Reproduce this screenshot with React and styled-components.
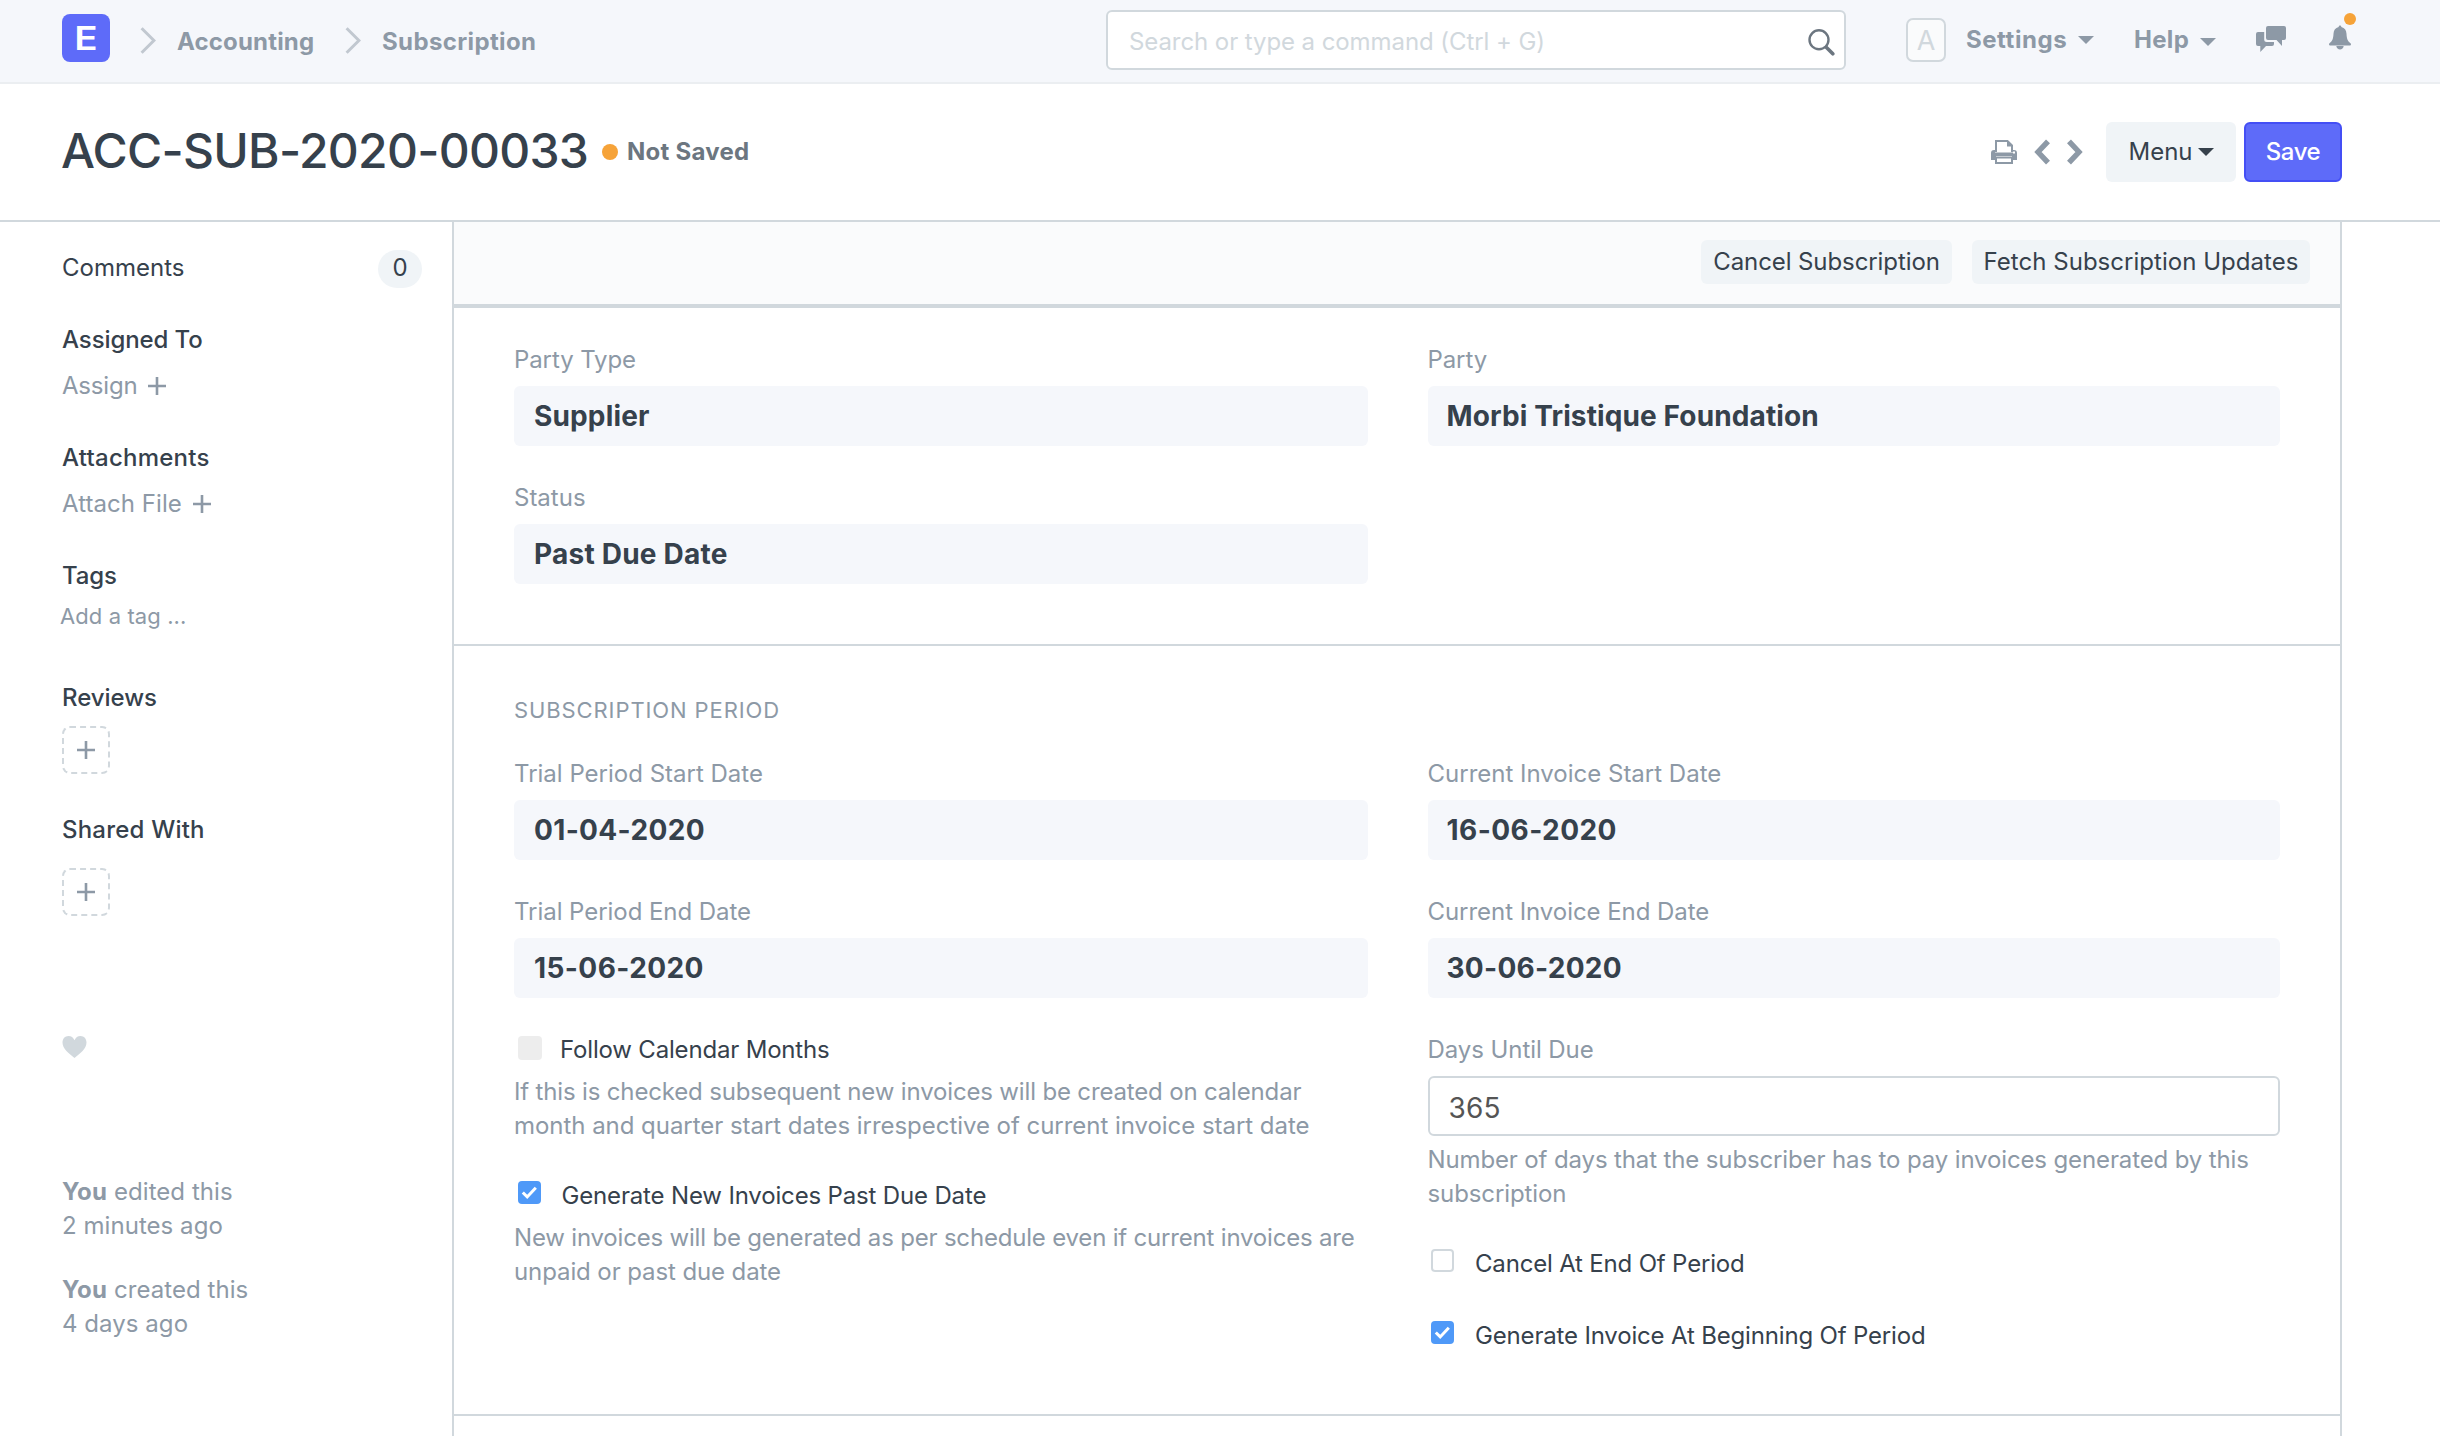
import React from "react";
import styled, { createGlobalStyle } from "styled-components";

const c = {
  ink: "#36414c",
  muted: "#8d99a6",
  line: "#d1d8dd",
  faint: "#f5f7fb",
  button: "#f0f4f7",
  primary: "#5e6bf9",
  orange: "#f6a339",
  blue: "#4f99f8",
};

const GlobalStyle = createGlobalStyle`
  * { box-sizing: border-box; }
  body {
    margin: 0;
    background: #fff;
    color: ${c.ink};
    font-family: Inter, "Liberation Sans", sans-serif;
    font-size: 24px;
    line-height: 34px;
    overflow: hidden;
  }
  svg { display: block; flex: none; }
`;

const Page = styled.div`
  display: flex;
  flex-direction: column;
  width: 2440px;
  height: 1436px;
  overflow: hidden;
`;

/* ---- navbar ---- */
const Navbar = styled.header`
  display: flex;
  align-items: flex-start;
  flex: none;
  height: 84px;
  padding-left: 62px;
  background: ${c.faint};
  border-bottom: 2px solid #ebeef1;
  color: ${c.muted};
`;
const Crumbs = styled.nav`
  display: flex;
  align-items: flex-start;
  width: 1044px;
`;
const Logo = styled.div`
  width: 48px;
  height: 48px;
  margin-top: 14px;
  border-radius: 8px;
  background: ${c.primary};
  color: #fff;
  font-size: 33px;
  font-weight: 600;
  line-height: 48px;
  text-align: center;
  span {
    display: block;
    transform: scaleX(1.17);
  }
`;
const CrumbChevron = styled.svg`
  margin: 27px 21px 0 30px;
`;
const Crumb = styled.span`
  width: ${(p) => p.$w}px;
  margin-top: 25px;
  font-weight: 700;
  letter-spacing: ${(p) => p.$track}px;
`;
const SearchBox = styled.div`
  display: flex;
  align-items: flex-start;
  justify-content: space-between;
  width: 740px;
  height: 60px;
  margin-top: 10px;
  padding: 13px 9.5px 0 21px;
  border: 2px solid ${c.line};
  border-radius: 6px;
  background: #fff;
  color: ${c.line};
  letter-spacing: -0.08px;
`;
const SearchIcon = styled.svg`
  margin-top: 4px;
`;
const Avatar = styled.div`
  width: 40px;
  height: 44px;
  margin: 18px 20px 0 60px;
  border: 2px solid ${c.line};
  border-radius: 7px;
  background: #fafbfc;
  color: ${c.line};
  font-size: 27px;
  line-height: 41px;
  text-align: center;
`;
const NavItem = styled.div`
  display: flex;
  justify-content: space-between;
  width: ${(p) => p.$w}px;
  margin: 23px 40px 0 0;
  font-weight: 700;
  letter-spacing: ${(p) => p.$track}px;
`;
const Caret = styled.i`
  flex: none;
  width: 16px;
  height: 8px;
  margin-top: ${(p) => p.$top || 0}px;
  background: currentColor;
  clip-path: polygon(0 0, 100% 0, 50% 100%);
`;
const ChatIcon = styled.svg`
  margin: 26px 43px 0 0;
`;
const BellWrap = styled.div`
  position: relative;
  margin-top: 25px;
`;
const BellDot = styled.span`
  position: absolute;
  top: -12px;
  left: 15px;
  width: 12px;
  height: 12px;
  border-radius: 50%;
  background: ${c.orange};
`;

/* ---- page head ---- */
const PageHead = styled.div`
  display: flex;
  align-items: flex-start;
  flex: none;
  height: 138px;
  padding: 38px 98px 0 61px;
  border-bottom: 2px solid ${c.line};
`;
const Title = styled.h1`
  width: 541px;
  margin: -5px 0 0;
  font-size: 48px;
  font-weight: 500;
  line-height: 68px;
  letter-spacing: -0.72px;
  white-space: nowrap;
`;
const Indicator = styled.span`
  display: flex;
  align-items: center;
  gap: 9px;
  margin-top: 13px;
  color: #6c7680;
  font-weight: 700;
  letter-spacing: 0.25px;
  &::before {
    content: "";
    width: 16px;
    height: 16px;
    border-radius: 50%;
    background: ${c.orange};
  }
`;
const HeadActions = styled.div`
  display: flex;
  align-items: center;
  height: 60px;
  margin-left: auto;
  color: ${c.muted};
`;
const Pager = styled.div`
  display: flex;
  gap: 17px;
  margin: -1px 23.5px 0 17px;
`;
const MenuButton = styled.button`
  display: flex;
  align-items: center;
  justify-content: space-between;
  width: 130px;
  height: 60px;
  margin-right: 8px;
  padding: 0 22px 0 22.5px;
  border: 0;
  border-radius: 6px;
  background: ${c.button};
  color: ${c.ink};
  font: inherit;
  line-height: 60px;
`;
const SaveButton = styled.button`
  width: 98px;
  height: 60px;
  padding: 0;
  border: 2px solid #444ff5;
  border-radius: 6px;
  background: ${c.primary};
  color: #fff;
  font: inherit;
  font-weight: 500;
  letter-spacing: -0.4px;
  line-height: 56px;
`;

/* ---- body ---- */
const Body = styled.div`
  display: flex;
  flex: 1;
  min-height: 0;
`;
const Sidebar = styled.aside`
  display: flex;
  flex-direction: column;
  align-items: flex-start;
  flex: none;
  width: 452px;
  padding: 28px 30px 0 62px;
  color: ${c.muted};
`;
const CommentsRow = styled.div`
  display: flex;
  justify-content: space-between;
  width: 100%;
  color: ${c.ink};
  line-height: 36px;
`;
const Badge = styled.span`
  width: 44px;
  height: 38px;
  border-radius: 19px;
  background: ${c.button};
  text-align: center;
`;
const SideTitle = styled.div`
  margin-top: ${(p) => p.$top}px;
  color: ${c.ink};
  font-weight: 500;
  letter-spacing: ${(p) => p.$track || 0}px;
`;
const SideLink = styled.div`
  display: flex;
  align-items: center;
  gap: 11px;
  margin-top: 12px;
  letter-spacing: ${(p) => p.$track}px;
`;
const TagInput = styled.div`
  margin: 6px 0 0 -2px;
  font-size: 22px;
  letter-spacing: 0.1px;
`;
const AddBox = styled.div`
  display: grid;
  place-items: center;
  width: 48px;
  height: 48px;
  margin-top: ${(p) => p.$top}px;
  border: 2px dashed ${c.line};
  border-radius: 8px;
`;
const Heart = styled.svg`
  margin-top: 120px;
`;
const Activity = styled.div`
  margin-top: ${(p) => p.$top}px;
  letter-spacing: 0.05px;
  b { font-weight: 700; letter-spacing: 0.2px; }
`;

const Panel = styled.main`
  flex: none;
  width: 1890px;
  border: solid ${c.line};
  border-width: 0 2px;
`;
const Toolbar = styled.div`
  display: flex;
  justify-content: flex-end;
  gap: 20px;
  height: 86px;
  padding: 18px 30px 0 0;
  border-bottom: 4px solid ${c.line};
  background: #fafbfc;
`;
const ToolButton = styled.button`
  width: ${(p) => p.$w}px;
  height: 44px;
  padding: 0;
  border: 0;
  border-radius: 6px;
  background: ${c.button};
  color: ${c.ink};
  font: inherit;
  letter-spacing: ${(p) => p.$track}px;
  line-height: 44px;
`;
const Section = styled.section`
  padding: ${(p) => p.$pad};
  border-bottom: 2px solid ${c.line};
`;
const SectionTitle = styled.div`
  margin-bottom: 30px;
  color: ${c.muted};
  font-size: 22px;
  letter-spacing: 0.9px;
`;
const Columns = styled.div`
  display: grid;
  grid-template-columns: 854px 852.5px;
  column-gap: 59.5px;
`;
const Column = styled.div`
  display: flex;
  flex-direction: column;
`;
const FieldWrap = styled.div`
  & + & { margin-top: 35px; }
`;
const Label = styled.div`
  margin-bottom: 9px;
  color: ${c.muted};
  letter-spacing: ${(p) => p.$track || 0}px;
`;
const Value = styled.div`
  height: 60px;
  padding-left: ${(p) => p.$left}px;
  border-radius: 6px;
  background: ${c.faint};
  font-size: 28px;
  font-weight: 700;
  line-height: 60px;
  letter-spacing: ${(p) => p.$track}px;
`;
const NumberBox = styled.div`
  height: 60px;
  padding: 2px 0 0 19px;
  border: 2px solid ${c.line};
  border-radius: 6px;
  color: #555;
  font-size: 28px;
  line-height: 56px;
  letter-spacing: 0.2px;
`;
const Description = styled.div`
  margin-top: ${(p) => p.$top || 8}px;
  color: ${c.muted};
  white-space: nowrap;
`;
const Line = styled.span`
  display: block;
  letter-spacing: ${(p) => p.$track || 0}px;
`;
const CheckRow = styled.div`
  display: flex;
  align-items: flex-start;
  gap: ${(p) => p.$gap}px;
  margin-top: ${(p) => p.$top}px;
  padding-left: ${(p) => p.$left}px;
  letter-spacing: ${(p) => p.$track || 0}px;
`;
const Box = styled.span`
  flex: none;
  width: ${(p) => (p.$kind === "disabled" ? 24 : 23)}px;
  height: ${(p) => (p.$kind === "disabled" ? 24 : 23)}px;
  margin-top: ${(p) => (p.$kind === "disabled" ? 3 : 2)}px;
  border: ${(p) => (p.$kind === "empty" ? `2px solid ${c.line}` : "0")};
  border-radius: 4px;
  background: ${(p) => ({ disabled: "#ededed", empty: "#fff", checked: c.blue })[p.$kind]};
`;

const Plus = () => (
  <svg width="18" height="18" viewBox="0 0 18 18" stroke={c.muted} strokeWidth="2.6">
    <path d="M9 0v18M0 9h18" />
  </svg>
);
const Tick = () => (
  <svg width="23" height="23" viewBox="0 0 23 23" fill="none" stroke="#fff" strokeWidth="3">
    <path d="M4.8 11.5l4.400 4.400 8.600-9.200" />
  </svg>
);
const Separator = () => (
  <CrumbChevron width="16" height="27" viewBox="0 0 16 27" fill="none" stroke="#c1c8d0" strokeWidth="3">
    <path d="M1.600 1.200l12.300 12.300L1.600 25.800" />
  </CrumbChevron>
);
const Arrow = ({ d }) => (
  <svg width="16" height="26" viewBox="0 0 16 26" fill="none" stroke={c.muted} strokeWidth="5.400">
    <path d={d} />
  </svg>
);

const Field = ({ label, value, track = 0.35, left = 20, labelTrack }) => (
  <FieldWrap>
    <Label $track={labelTrack}>{label}</Label>
    <Value $track={track} $left={left}>{value}</Value>
  </FieldWrap>
);
const Check = ({ kind, gap, top, left = 4, track, children }) => (
  <CheckRow $gap={gap} $top={top} $left={left} $track={track}>
    <Box $kind={kind}>{kind === "checked" && <Tick />}</Box>
    {children}
  </CheckRow>
);

export default function App() {
  return (
    <Page>
      <GlobalStyle />
      <Navbar>
        <Crumbs>
          <Logo><span>E</span></Logo>
          <Separator />
          <Crumb $w={138} $track={0.17}>Accounting</Crumb>
          <Separator />
          <Crumb $w={160} $track={0.37}>Subscription</Crumb>
        </Crumbs>
        <SearchBox>
          Search or type a command (Ctrl + G)
          <SearchIcon width="27" height="27" viewBox="0 0 27 27" fill="none" stroke="#6c7680">
            <circle cx="11" cy="10.800" r="9.500" strokeWidth="2.400" />
            <path d="M18.500 18.500l6.300 6.300" strokeWidth="3.600" strokeLinecap="round" />
          </SearchIcon>
        </SearchBox>
        <Avatar>A</Avatar>
        <NavItem $w={128} $track={0.55}>Settings<Caret $top={13} /></NavItem>
        <NavItem $w={82} $track={0.3}>Help<Caret $top={15} /></NavItem>
        <ChatIcon width="30" height="26" viewBox="0 0 30 26" fill={c.muted}>
          <path d="M12 0h16q2 0 2 2v10q0 2-2 2h-2v6l-5.500-6H12q-2 0-2-2V2q0-2 2-2z" />
          <path d="M2 6h6.200v7.500q0 2.500 2.500 2.500H18v2q0 2-2 2h-6l-5.700 6v-6H2q-2 0-2-2V8q0-2 2-2z" />
        </ChatIcon>
        <BellWrap>
          <svg width="22" height="25" viewBox="0 0 22 25" fill={c.muted}>
            <path d="M11 .5c.8 0 1.300.6 1.400 1.500 3.200.8 4.900 3.200 5.100 6.800.2 4.900 1.200 7.600 4.200 9.600.5.500.3 1.100 0 1.600-.2.400-.5.500-.9.500H1.200c-.4 0-.7-.1-.9-.5-.3-.5-.5-1.100 0-1.600 3-2 4-4.700 4.200-9.600.2-3.600 1.900-6 5.100-6.800.1-.9.600-1.500 1.400-1.500z" />
            <path d="M7.300 21h7.400c-.3 2.200-1.800 3.600-3.700 3.600S7.600 23.200 7.300 21z" />
          </svg>
          <BellDot />
        </BellWrap>
      </Navbar>

      <PageHead>
        <Title>ACC-SUB-2020-00033</Title>
        <Indicator>Not Saved</Indicator>
        <HeadActions>
          <svg width="26" height="24" viewBox="0 0 26 24" fill="none">
            <path d="M5 12V1h11.500l4.500 4.500V12" stroke={c.muted} strokeWidth="2" />
            <path d="M16 1v5.500h5.500z" fill={c.muted} />
            <path
              fillRule="evenodd"
              fill={c.muted}
              d="M3 10h1v2.500h18V10h1q3 0 3 3v7h-5v-4H5v4H0v-7q0-3 3-3zM22 11.500h2v2h-2z"
            />
            <path d="M5 17.500V23h16v-5.500z" fill="#fff" stroke={c.muted} strokeWidth="2" />
          </svg>
          <Pager>
            <Arrow d="M14 2.300L4 13l10 10.700" />
            <Arrow d="M2 2.300L12 13 2 23.700" />
          </Pager>
          <MenuButton>Menu<Caret /></MenuButton>
          <SaveButton>Save</SaveButton>
        </HeadActions>
      </PageHead>

      <Body>
        <Sidebar>
          <CommentsRow>Comments<Badge>0</Badge></CommentsRow>
          <SideTitle $top={35} $track={-0.1}>Assigned To</SideTitle>
          <SideLink $track={-0.2}>Assign<Plus /></SideLink>
          <SideTitle $top={38} $track={0.25}>Attachments</SideTitle>
          <SideLink $track={0.06}>Attach File<Plus /></SideLink>
          <SideTitle $top={38} $track={-0.1}>Tags</SideTitle>
          <TagInput>Add a tag ...</TagInput>
          <SideTitle $top={48} $track={-0.05}>Reviews</SideTitle>
          <AddBox $top={11}><Plus /></AddBox>
          <SideTitle $top={39} $track={0.2}>Shared With</SideTitle>
          <AddBox $top={21}><Plus /></AddBox>
          <Heart width="25" height="22" viewBox="0 0 25 22" fill={c.line}>
            <path d="M12.500 22C7 17.500.5 12.800.5 6.500.5 2.800 3 0 6.500 0c2.800 0 4.800 1.500 6 4.300C13.700 1.500 15.700 0 18.500 0c3.500 0 6 2.800 6 6.500C24.500 12.800 18 17.500 12.500 22z" />
          </Heart>
          <Activity $top={117}><b>You</b> edited this<br />2 minutes ago</Activity>
          <Activity $top={30}><b>You</b> created this<br />4 days ago</Activity>
        </Sidebar>

        <Panel>
          <Toolbar>
            <ToolButton $w={251} $track={-0.09}>Cancel Subscription</ToolButton>
            <ToolButton $w={338} $track={0.03}>Fetch Subscription Updates</ToolButton>
          </Toolbar>

          <Section $pad="35px 60px 60px">
            <Columns>
              <Column>
                <Field label="Party Type" value="Supplier" track={0.15} labelTrack={-0.1} />
                <Field label="Status" value="Past Due Date" track={0.22} />
              </Column>
              <Column>
                <Field label="Party" value="Morbi Tristique Foundation" track={0.12} left={19} labelTrack={-0.1} />
              </Column>
            </Columns>
          </Section>

          <Section $pad="47px 60px 61px">
            <SectionTitle>SUBSCRIPTION PERIOD</SectionTitle>
            <Columns>
              <Column>
                <Field label="Trial Period Start Date" value="01-04-2020" />
                <Field label="Trial Period End Date" value="15-06-2020" labelTrack={-0.05} track={0.42} />
                <Check kind="disabled" gap={18} top={35} track={-0.18}>Follow Calendar Months</Check>
                <Description>
                  <Line $track={-0.16}>If this is checked subsequent new invoices will be created on calendar</Line>
                  <Line $track={-0.04}>month and quarter start dates irrespective of current invoice start date</Line>
                </Description>
                <Check kind="checked" gap={20.5} top={36} track={-0.16}>
                  Generate New Invoices Past Due Date
                </Check>
                <Description>
                  <Line $track={-0.19}>New invoices will be generated as per schedule even if current invoices are</Line>
                  <Line $track={-0.1}>unpaid or past due date</Line>
                </Description>
              </Column>
              <Column>
                <Field label="Current Invoice Start Date" value="16-06-2020" left={19} track={0.45} />
                <Field
                  label="Current Invoice End Date"
                  value="30-06-2020"
                  left={19}
                  track={0.28}
                  labelTrack={-0.05}
                />
                <FieldGap />
                <Label $track={-0.07}>Days Until Due</Label>
                <NumberBox>365</NumberBox>
                <Description $top={7}>
                  <Line $track={-0.13}>Number of days that the subscriber has to pay invoices generated by this</Line>
                  <Line $track={-0.1}>subscription</Line>
                </Description>
                <Check kind="empty" gap={21.5} left={3} top={36} track={-0.18}>Cancel At End Of Period</Check>
                <Check kind="checked" gap={21.5} left={3} top={38} track={-0.17}>
                  Generate Invoice At Beginning Of Period
                </Check>
              </Column>
            </Columns>
          </Section>
        </Panel>
      </Body>
    </Page>
  );
}

const FieldGap = styled.div`
  height: 35px;
`;
